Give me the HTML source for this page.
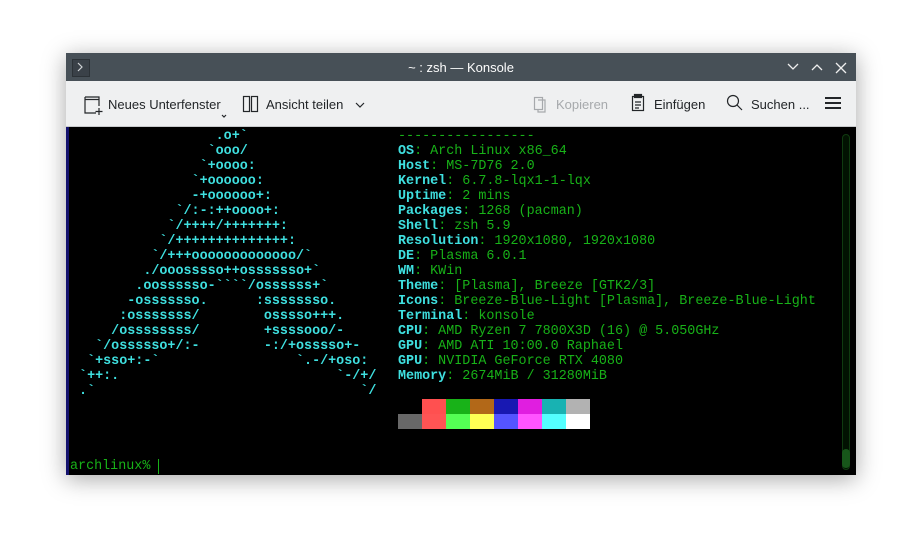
<!DOCTYPE html>
<html><head><meta charset="utf-8"><style>
html,body{margin:0;padding:0;width:923px;height:554px;background:#fff;overflow:hidden;font-family:"Liberation Sans",sans-serif}
.win{position:absolute;left:66px;top:53px;width:790px;height:422px;box-shadow:0 4px 22px rgba(0,0,0,.35);background:#000}
.title{position:absolute;left:0;top:0;width:790px;height:28px;background:#475057;color:#fcfcfc;font-size:13px;text-align:center;line-height:30px}
.tb{position:absolute;left:0;top:28px;width:790px;height:45px;background:#eff0f1;border-bottom:1px solid #c8cacc;color:#232629;font-size:13px}
.tb span{position:absolute;top:16px}
.term{position:absolute;left:0;top:74px;width:790px;height:348px;background:#000}
pre{margin:0;position:absolute;left:5px;top:2px;font-family:"Liberation Mono",monospace;font-size:13.4px;line-height:15px;color:#18b218}
.c{color:#3fe0e0;font-weight:bold}
.g{color:#18b218}
</style></head><body>
<div class="win">
<div class="title">~ : zsh — Konsole
<div style="position:absolute;left:6px;top:6px;width:16px;height:16px;background:#3a4148;border:1px solid #2c3237"></div>
<svg style="position:absolute;left:0;top:0" width="790" height="28"><path d="M12 10l4 4-4 4" stroke="#cfd3d6" fill="none" stroke-width="1.2"/>
<path d="M722 11l5 5 5-5M746 17l5-5 5 5M770 10l10 10M780 10l-10 10" stroke="#eee" fill="none" stroke-width="1.3"/></svg></div>
<div class="tb">
<svg style="position:absolute;left:0;top:0" width="790" height="45">
<g stroke="#232629" fill="none" stroke-width="1.2">
<path d="M19 16h14v9M19 16v16h11M19 18.5h14M33 27v7M29.5 30.5h7"/>
<rect x="177.5" y="15.5" width="6" height="15"/><rect x="185.5" y="15.5" width="6" height="15"/>
<path d="M290 22l4 4 4-4"/><path d="M156 34l2 2 2-2" />
<rect x="566.5" y="15.5" width="11" height="14"/><rect x="568.5" y="13.5" width="7" height="3" fill="#232629"/><path d="M569 21h6M569 24h6M569 27h4"/>
<circle cx="667" cy="20" r="5.5"/><path d="M671 24l5 5"/>
<path d="M759 17h16M759 22h16M759 27h16" stroke-width="2"/></g>
<g stroke="#a6a9ac" fill="none" stroke-width="1.2"><rect x="468.5" y="16.5" width="8" height="12"/><path d="M472 19h7v12h-7v-3"/></g>
</svg>
<span style="left:42px">Neues Unterfenster</span>
<span style="left:200px">Ansicht teilen</span>
<span style="left:490px;color:#a6a9ac">Kopieren</span>
<span style="left:588px">Einfügen</span>
<span style="left:685px">Suchen ...</span>
</div>
<div class="term">
<div style="position:absolute;left:0;top:0;width:3px;height:348px;background:#14126e"></div>
<div style="position:absolute;left:776px;top:7px;width:6px;height:334px;border:1px solid #0f3a10;border-radius:4px;background:#021202"></div>
<div style="position:absolute;left:776px;top:322px;width:8px;height:19px;border-radius:4px;background:#17561a"></div>
<pre class="c" style="left:5px">                  .o+&#96;
                 &#96;ooo/
                &#96;+oooo:
               &#96;+oooooo:
               -+oooooo+:
             &#96;/:-:++oooo+:
            &#96;/++++/+++++++:
           &#96;/++++++++++++++:
          &#96;/+++ooooooooooooo/&#96;
         ./ooosssso++osssssso+&#96;
        .oossssso-&#96;&#96;&#96;&#96;/ossssss+&#96;
       -osssssso.      :ssssssso.
      :osssssss/        osssso+++.
     /ossssssss/        +ssssooo/-
   &#96;/ossssso+/:-        -:/+osssso+-
  &#96;+sso+:-&#96;                 &#96;.-/+oso:
 &#96;++:.                           &#96;-/+/
 .&#96;                                 &#96;/</pre>
<pre style="left:4px;top:332px">archlinux% <span style="border-left:1px solid #18b218"> </span></pre>
<pre style="left:332px"><span class="g">-----------------</span>
<span class="c">OS</span>: Arch Linux x86_64
<span class="c">Host</span>: MS-7D76 2.0
<span class="c">Kernel</span>: 6.7.8-lqx1-1-lqx
<span class="c">Uptime</span>: 2 mins
<span class="c">Packages</span>: 1268 (pacman)
<span class="c">Shell</span>: zsh 5.9
<span class="c">Resolution</span>: 1920x1080, 1920x1080
<span class="c">DE</span>: Plasma 6.0.1
<span class="c">WM</span>: KWin
<span class="c">Theme</span>: [Plasma], Breeze [GTK2/3]
<span class="c">Icons</span>: Breeze-Blue-Light [Plasma], Breeze-Blue-Light
<span class="c">Terminal</span>: konsole
<span class="c">CPU</span>: AMD Ryzen 7 7800X3D (16) @ 5.050GHz
<span class="c">GPU</span>: AMD ATI 10:00.0 Raphael
<span class="c">GPU</span>: NVIDIA GeForce RTX 4080
<span class="c">Memory</span>: 2674MiB / 31280MiB</pre>
<div style="position:absolute;left:332px;top:272px;width:192px;height:15px;display:flex">
<div style="width:24px;background:#000"></div><div style="width:24px;background:#ff5050"></div><div style="width:24px;background:#18b218"></div><div style="width:24px;background:#b26818"></div><div style="width:24px;background:#1818b2"></div><div style="width:24px;background:#e01ee0"></div><div style="width:24px;background:#18b2b2"></div><div style="width:24px;background:#b2b2b2"></div></div>
<div style="position:absolute;left:332px;top:287px;width:192px;height:15px;display:flex">
<div style="width:24px;background:#686868"></div><div style="width:24px;background:#ff5454"></div><div style="width:24px;background:#54ff54"></div><div style="width:24px;background:#ffff54"></div><div style="width:24px;background:#5454ff"></div><div style="width:24px;background:#ff54ff"></div><div style="width:24px;background:#54ffff"></div><div style="width:24px;background:#fff"></div></div>
</div>
</div>
</body></html>
